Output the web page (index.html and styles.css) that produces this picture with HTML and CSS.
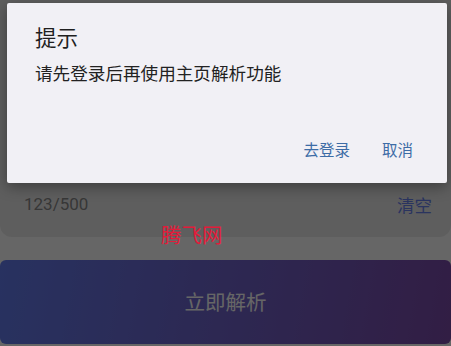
FILE: index.html
```html
<!DOCTYPE html>
<html lang="zh-CN">
<head>
    <meta charset="UTF-8">
    <meta name="viewport" content="width=device-width, initial-scale=1.0">
    <title>主页解析</title>
    <link rel="stylesheet" href="styles.css">
</head>
<body>
    <div class="page">
        <div class="input-card">
            <div class="input-footer">
                <span class="count">123/500</span>
                <span class="clear">清空</span>
            </div>
        </div>
        <div class="parse-btn">立即解析</div>
    </div>

    <div class="mask"></div>
    <div class="watermark">腾飞网</div>

    <div class="dialog">
        <div class="dialog-title">提示</div>
        <div class="dialog-text">请先登录后再使用主页解析功能</div>
        <div class="dialog-actions">
            <span class="dialog-btn">去登录</span>
            <span class="dialog-btn">取消</span>
        </div>
    </div>
</body>
</html>
```

FILE: styles.css
```css
body {
    font-family: Roboto, "Noto Sans CJK SC", sans-serif;
    background: #ffffff;
    margin: 0;
    width: 451px;
    height: 346px;
    overflow: hidden;
    position: relative;
}

.page {
    display: flex;
    flex-direction: column;
    height: 100%;
}

.input-card {
    background: #ececec;
    height: 237px;
    border-radius: 0 0 12px 12px;
    display: flex;
    flex-direction: column;
    justify-content: flex-end;
    box-sizing: border-box;
    padding: 0 19px 23px 24px;
}

.input-footer {
    display: flex;
    justify-content: space-between;
    align-items: center;
    height: 20px;
}

.count {
    font-size: 17px;
    color: #8a8a8a;
}

.clear {
    font-size: 17.5px;
    color: #6a82ee;
}

.parse-btn {
    margin-top: 23px;
    height: 84px;
    border-radius: 6px;
    background: linear-gradient(100deg, #647df0 0%, #7d4baa 100%);
    color: #ffffff;
    font-size: 20.5px;
    display: flex;
    align-items: center;
    justify-content: center;
    padding-bottom: 2px;
    box-sizing: border-box;
}

.mask {
    position: absolute;
    inset: 0;
    background: rgba(0, 0, 0, 0.6);
}

.watermark {
    position: absolute;
    left: 161px;
    top: 219px;
    font-family: "Noto Sans CJK SC", sans-serif;
    font-size: 20.5px;
    font-weight: 400;
    color: #e31b3a;
}

.dialog {
    position: absolute;
    top: 3px;
    left: 7px;
    width: 440px;
    height: 180px;
    background: #f1f0f5;
    border-radius: 2px;
    box-shadow: 0 4px 14px rgba(0, 0, 0, 0.35);
    box-sizing: border-box;
    padding: 21px 28px 0 28px;
    display: flex;
    flex-direction: column;
}

.dialog-title {
    font-size: 21.5px;
    color: #1f1f1f;
    line-height: 30px;
}

.dialog-text {
    margin-top: 8px;
    font-size: 17.6px;
    color: #222222;
    line-height: 24px;
}

.dialog-actions {
    margin-top: auto;
    margin-bottom: 22px;
    display: flex;
    justify-content: flex-end;
    gap: 32px;
    padding-right: 6px;
}

.dialog-btn {
    font-size: 15.5px;
    color: #3d6ca6;
    line-height: 20px;
}
```
